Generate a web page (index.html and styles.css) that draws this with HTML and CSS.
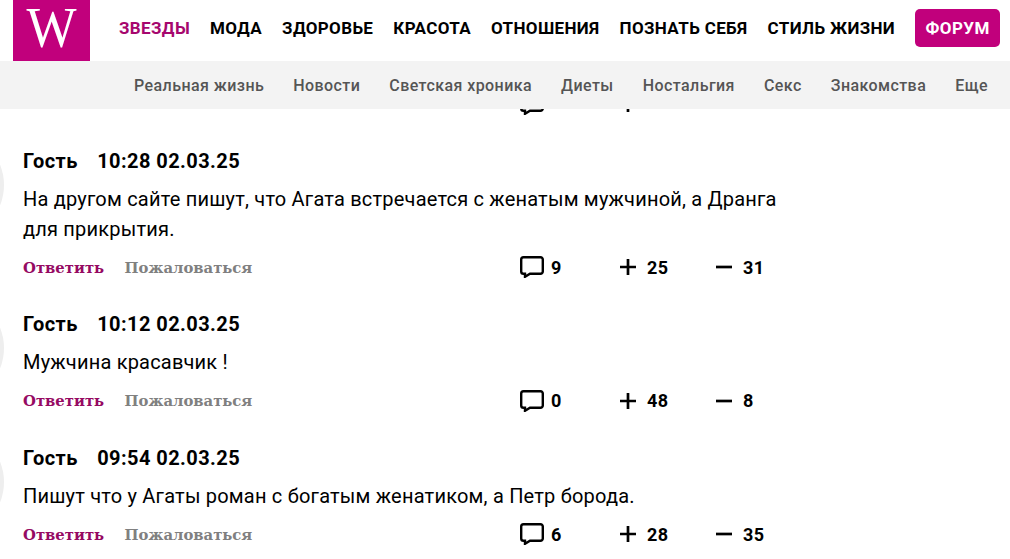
FILE: index.html
```html
<!DOCTYPE html>
<html lang="ru">
<head>
<meta charset="utf-8">
<title>Комментарии</title>
<link rel="stylesheet" href="styles.css">
</head>
<body>
<header class="site-header">
  <div class="top-bar">
    <a class="logo"><span class="logo-mark">W</span></a>
    <nav class="main-nav">
      <a class="nav-item active">ЗВЕЗДЫ</a>
      <a class="nav-item">МОДА</a>
      <a class="nav-item">ЗДОРОВЬЕ</a>
      <a class="nav-item">КРАСОТА</a>
      <a class="nav-item">ОТНОШЕНИЯ</a>
      <a class="nav-item">ПОЗНАТЬ СЕБЯ</a>
      <a class="nav-item">СТИЛЬ ЖИЗНИ</a>
      <a class="forum">ФОРУМ</a>
    </nav>
  </div>
  <nav class="sub-nav">
    <a>Реальная жизнь</a>
    <a>Новости</a>
    <a>Светская хроника</a>
    <a>Диеты</a>
    <a>Ностальгия</a>
    <a>Секс</a>
    <a>Знакомства</a>
    <a>Еще</a>
  </nav>
</header>
<main class="comments">
  <article class="comment">
    <div class="actions">
      <span class="links"></span>
      <span class="stat reply"><svg class="icon" viewBox="0 0 24 22"><path d="M3.5 1.200h17A2.300 2.300 0 0 1 22.800 3.500v12a2.300 2.300 0 0 1-2.300 2.300H10l-5 3v-3H3.500A2.300 2.300 0 0 1 1.200 15.500v-12A2.300 2.300 0 0 1 3.500 1.200z"/></svg></span>
      <span class="stat plus"><svg class="icon" viewBox="0 0 16 16"><path d="M8 0v16M0 8h16"/></svg></span>
    </div>
  </article>
  <article class="comment">
    <span class="avatar"></span>
    <h3 class="meta"><span>Гость</span><span>10:28 02.03.25</span></h3>
    <p class="text">На другом сайте пишут, что Агата встречается с женатым мужчиной, а Дранга для прикрытия.</p>
    <div class="actions">
      <span class="links"><a class="answer">Ответить</a><a class="report">Пожаловаться</a></span>
      <span class="stat reply"><svg class="icon" viewBox="0 0 24 22"><path d="M3.5 1.200h17A2.300 2.300 0 0 1 22.800 3.500v12a2.300 2.300 0 0 1-2.300 2.300H10l-5 3v-3H3.500A2.300 2.300 0 0 1 1.200 15.500v-12A2.300 2.300 0 0 1 3.500 1.200z"/></svg>9</span>
      <span class="stat plus"><svg class="icon" viewBox="0 0 16 16"><path d="M8 0v16M0 8h16"/></svg>25</span>
      <span class="stat minus"><svg class="icon" viewBox="0 0 16 16"><path d="M0 8h16"/></svg>31</span>
    </div>
  </article>
  <article class="comment">
    <span class="avatar"></span>
    <h3 class="meta"><span>Гость</span><span>10:12 02.03.25</span></h3>
    <p class="text">Мужчина красавчик !</p>
    <div class="actions">
      <span class="links"><a class="answer">Ответить</a><a class="report">Пожаловаться</a></span>
      <span class="stat reply"><svg class="icon" viewBox="0 0 24 22"><path d="M3.5 1.200h17A2.300 2.300 0 0 1 22.800 3.500v12a2.300 2.300 0 0 1-2.300 2.300H10l-5 3v-3H3.500A2.300 2.300 0 0 1 1.200 15.500v-12A2.300 2.300 0 0 1 3.500 1.200z"/></svg>0</span>
      <span class="stat plus"><svg class="icon" viewBox="0 0 16 16"><path d="M8 0v16M0 8h16"/></svg>48</span>
      <span class="stat minus"><svg class="icon" viewBox="0 0 16 16"><path d="M0 8h16"/></svg>8</span>
    </div>
  </article>
  <article class="comment">
    <span class="avatar"></span>
    <h3 class="meta"><span>Гость</span><span>09:54 02.03.25</span></h3>
    <p class="text">Пишут что у Агаты роман с богатым женатиком, а Петр борода.</p>
    <div class="actions">
      <span class="links"><a class="answer">Ответить</a><a class="report">Пожаловаться</a></span>
      <span class="stat reply"><svg class="icon" viewBox="0 0 24 22"><path d="M3.5 1.200h17A2.300 2.300 0 0 1 22.800 3.500v12a2.300 2.300 0 0 1-2.300 2.300H10l-5 3v-3H3.500A2.300 2.300 0 0 1 1.200 15.500v-12A2.300 2.300 0 0 1 3.500 1.200z"/></svg>6</span>
      <span class="stat plus"><svg class="icon" viewBox="0 0 16 16"><path d="M8 0v16M0 8h16"/></svg>28</span>
      <span class="stat minus"><svg class="icon" viewBox="0 0 16 16"><path d="M0 8h16"/></svg>35</span>
    </div>
  </article>
</main>
</body>
</html>
```
FILE: styles.css
```css
* { box-sizing: border-box; }
html, body { margin: 0; height: 100%; overflow: hidden; background: #fff; }
body { font-family: Roboto, "Liberation Sans", sans-serif; color: #000; }
a { text-decoration: none; color: inherit; }

.site-header { position: fixed; top: 0; left: 0; right: 0; z-index: 5; background: #fff; }
.top-bar { height: 61px; display: flex; padding-left: 13px; }
.logo {
  width: 77px; height: 61px; background: #c1007c; color: #fff;
  font-family: "Liberation Serif", serif; font-size: 53px; line-height: 59px; text-align: center;
}
.logo-mark { display: inline-block; transform: scaleY(1.08); transform-origin: 50% 47.5px; }
.main-nav { display: flex; align-items: center; margin-left: 29px; height: 56px; gap: 20px; }
.nav-item { font-size: 17px; font-weight: 700; letter-spacing: 0.36px; }
.nav-item.active { color: #a6076e; }
.forum {
  background: #c1007c; color: #fff; font-size: 17px; font-weight: 700; letter-spacing: 0.4px;
  width: 85px; height: 38px; line-height: 38px; text-align: center; border-radius: 5px;
}
.sub-nav {
  height: 48px; background: #f3f3f3; display: flex; justify-content: flex-end; align-items: center;
  gap: 29px; padding-right: 22px; font-size: 16px; font-weight: 500; letter-spacing: 0.43px; color: #555;
}

.comments { padding: 92px 0 0 23px; width: 780px; }
.comment { position: relative; padding-bottom: 33px; }
.avatar {
  position: absolute; left: -129px; top: -19px; width: 110px; height: 110px; border-radius: 50%; background: #eee;
}
.meta { position: relative; margin: 0; font-size: 20px; line-height: 24px; font-weight: 700; letter-spacing: 0.42px; display: flex; gap: 19.5px; }
.text { position: relative; margin: 12px 0 0; font-size: 20px; line-height: 29.5px; font-weight: 400; letter-spacing: 0.2px; }
.actions { display: flex; align-items: center; height: 24px; margin-top: 11px; font-weight: 700; font-size: 18px; letter-spacing: 0.3px; }
.comment:first-child .actions { margin-top: 0; }
.links { width: 497px; display: flex; gap: 20.500px; font-family: "DejaVu Serif", serif; font-size: 14.800px; letter-spacing: 0; }
.answer { color: #960a63; }
.report { color: #808080; }
.stat { display: flex; align-items: center; gap: 7px; }
.reply { width: 100px; }
.plus { width: 96px; gap: 11px; }
.minus { gap: 11px; }
.icon { fill: none; stroke: #000; stroke-width: 2.4; }
.reply .icon { width: 24px; height: 22px; }
.plus .icon, .minus .icon { width: 16px; height: 16px; stroke-width: 2.7; }
```
